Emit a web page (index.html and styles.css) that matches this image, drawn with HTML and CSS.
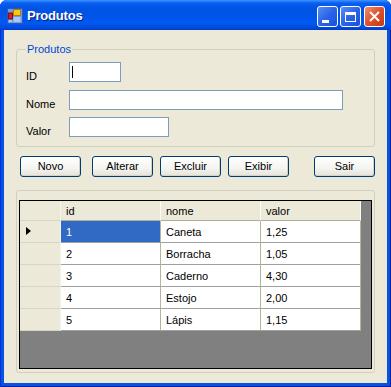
FILE: index.html
```html
<!doctype html>
<html lang="pt">
  <head>
    <meta charset="UTF-8" />
    <title>Produtos</title>
    <link rel="stylesheet" href="styles.css">
  </head>
  <body>
    <div class="window">
      <div class="titlebar">
        <svg class="app-icon" width="16" height="16" viewBox="0 0 16 16">
          <rect x="0.5" y="0.5" width="15" height="15" fill="#6f9be8" stroke="#2a56c6" />
          <rect x="1.5" y="5" width="4" height="6" fill="#d82020" stroke="#7a1010" stroke-width="1" />
          <rect x="6.5" y="1.5" width="7" height="6" fill="#f6c81a" stroke="#b07c00" stroke-width="1" />
          <rect x="6.5" y="9" width="7" height="5" fill="#a8c8f8" />
          <rect x="2" y="12" width="3" height="2" fill="#a8c8f8" />
        </svg>
        <span class="title">Produtos</span>
        <div class="controls">
          <div class="ctl">
            <span class="min-glyph"></span>
          </div>
          <div class="ctl">
            <span class="max-glyph"></span>
          </div>
          <div class="ctl close">
            <svg width="21" height="21" viewBox="0 0 21 21">
              <path d="M6 6 L15 15 M15 6 L6 15" stroke="#fff" stroke-width="2" />
            </svg>
          </div>
        </div>
      </div>
      <div class="content">
        <div class="group form-group">
          <div class="group-title">Produtos</div>
          <div class="row first">
            <span class="label">ID</span>
            <div class="field field-id"><span class="caret"></span></div>
          </div>
          <div class="row second">
            <span class="label">Nome</span>
            <div class="field field-nome"></div>
          </div>
          <div class="row third">
            <span class="label">Valor</span>
            <div class="field field-valor"></div>
          </div>
        </div>

        <div class="buttons">
          <div class="btn b-novo">Novo</div>
          <div class="btn b-alterar">Alterar</div>
          <div class="btn b-excluir">Excluir</div>
          <div class="btn b-exibir">Exibir</div>
          <div class="btn b-sair">Sair</div>
        </div>

        <div class="group grid-group">
          <div class="grid">
            <div class="grid-row head">
              <div class="rh"></div>
              <div class="hc">id</div>
              <div class="hc">nome</div>
              <div class="hc">valor</div>
            </div>
            <div class="grid-row">
              <div class="rh"><span class="arrow"></span></div>
              <div class="cell selected">1</div>
              <div class="cell">Caneta</div>
              <div class="cell">1,25</div>
            </div>
            <div class="grid-row">
              <div class="rh"></div>
              <div class="cell">2</div>
              <div class="cell">Borracha</div>
              <div class="cell">1,05</div>
            </div>
            <div class="grid-row">
              <div class="rh"></div>
              <div class="cell">3</div>
              <div class="cell">Caderno</div>
              <div class="cell">4,30</div>
            </div>
            <div class="grid-row">
              <div class="rh"></div>
              <div class="cell">4</div>
              <div class="cell">Estojo</div>
              <div class="cell">2,00</div>
            </div>
            <div class="grid-row">
              <div class="rh"></div>
              <div class="cell">5</div>
              <div class="cell">Lápis</div>
              <div class="cell">1,15</div>
            </div>
          </div>
        </div>
      </div>
    </div>
  </body>
</html>
```

FILE: styles.css
```css
* {
  box-sizing: border-box;
}

body {
  margin: 0;
  padding: 0;
  font-family: "Liberation Sans", Arial, sans-serif;
  font-size: 11px;
  line-height: 13px;
  color: #000;
  background: #fff;
}

.window {
  width: 391px;
  height: 387px;
  display: flex;
  flex-direction: column;
  background: #0553e0;
  border-radius: 7px 7px 0 0;
  overflow: hidden;
  box-shadow: inset 1px 0 0 #0831d9, inset -1px 0 0 #001ea0, inset 0 -1px 0 #001ea0;
}

/* title bar */
.titlebar {
  height: 30px;
  flex: none;
  display: flex;
  align-items: center;
  padding: 0 6px 0 7px;
  background: linear-gradient(to bottom, #3d95ff 0, #0a5ff3 3px, #0054e3 8px, #0055eb 18px, #0058ef 24px, #0048d8 28px, #003cc8 30px);
}
.app-icon {
  flex: none;
  margin-top: 1px;
}
.title {
  margin-left: 4px;
  color: #fff;
  font-weight: bold;
  font-size: 13px;
  letter-spacing: -0.2px;
  text-shadow: 1px 1px #0a1e7a;
  margin-top: 1px;
}
.controls {
  margin-left: auto;
  display: flex;
  gap: 2px;
  margin-top: 2px;
}
.ctl {
  width: 21px;
  height: 21px;
  border: 1px solid #fff;
  border-radius: 3px;
  background: linear-gradient(135deg, #5a8df7 0%, #2a63e8 50%, #1b50d8 100%);
  position: relative;
}
.ctl.close {
  margin-left: 1px;
  background: linear-gradient(135deg, #f08f6e 0%, #e0502b 50%, #c63814 100%);
}
.ctl.close svg {
  display: block;
  margin: -1px;
}
.min-glyph {
  position: absolute;
  left: 4px;
  top: 13px;
  width: 7px;
  height: 3px;
  background: #fff;
}
.max-glyph {
  position: absolute;
  left: 4px;
  top: 5px;
  width: 11px;
  height: 10px;
  border: 1px solid #fff;
  border-top-width: 3px;
}

/* client area */
.content {
  flex: 1;
  margin: 0 4px 4px;
  background: #ece9d8;
  padding: 19px 12px 0;
  display: flex;
  flex-direction: column;
}

.group {
  border: 1px solid #d0d0bf;
  border-radius: 3px;
}

.form-group {
  padding: 0 0 9px 9px;
  height: 98px;
}
.group-title {
  display: block;
  width: max-content;
  height: 13px;
  margin-top: -7px;
  padding: 0 1px;
  background: #ece9d8;
  color: #0046d5;
}
.row {
  display: flex;
  align-items: flex-end;
  height: 20px;
}
.row.first {
  margin-top: 6px;
}
.row.second {
  margin-top: 8px;
}
.row.third {
  margin-top: 7px;
}
.label {
  width: 43px;
  flex: none;
  margin-bottom: -1px;
}
.field {
  height: 20px;
  border: 1px solid #7f9db9;
  background: #fff;
  align-self: stretch;
  position: relative;
}
.field-id {
  width: 52px;
}
.field-nome {
  width: 274px;
}
.field-valor {
  width: 100px;
}
.caret {
  position: absolute;
  left: 2px;
  top: 3px;
  width: 1px;
  height: 12px;
  background: #000;
}

/* buttons */
.buttons {
  display: flex;
  margin-top: 9px;
  padding-left: 4px;
}
.btn {
  width: 61px;
  height: 21px;
  border: 1px solid #003c74;
  border-radius: 3px;
  background: linear-gradient(to bottom, #ffffff 0%, #f4f4f0 60%, #e3e2da 100%);
  box-shadow: inset -1px -1px 0 #d6d0c5;
  display: flex;
  align-items: center;
  justify-content: center;
  padding-bottom: 1px;
}
.b-alterar {
  margin-left: 11px;
}
.b-excluir,
.b-exibir {
  margin-left: 7px;
}
.b-sair {
  margin-left: 25px;
}

/* data grid */
.grid-group {
  margin-top: 13px;
  height: 183px;
  padding: 9px 2px 3px 2px;
}
.grid {
  height: 169px;
  border: 1px solid #000;
  background: #808080;
}
.grid-row {
  display: flex;
  height: 22px;
}
.grid-row.head {
  height: 20px;
}
.rh {
  width: 41px;
  flex: none;
  background: #ece9d8;
  border-right: 1px solid #f4f3ee;
  border-bottom: 1px solid #d8d5c6;
  position: relative;
}
.hc {
  width: 100px;
  flex: none;
  background: #ece9d8;
  border-right: 1px solid #fbfbf8;
  border-bottom: 1px solid #b0ad9c;
  padding: 4px 0 0 5px;
}
.cell {
  width: 100px;
  flex: none;
  background: #fff;
  border-right: 1px solid #b8b49a;
  border-bottom: 1px solid #a0a0a0;
  padding: 5px 0 0 5px;
}
.cell.selected {
  background: #316ac5;
  color: #fff;
}
.arrow {
  position: absolute;
  left: 6px;
  top: 6px;
  border-left: 5px solid #000;
  border-top: 4px solid transparent;
  border-bottom: 4px solid transparent;
}
```
